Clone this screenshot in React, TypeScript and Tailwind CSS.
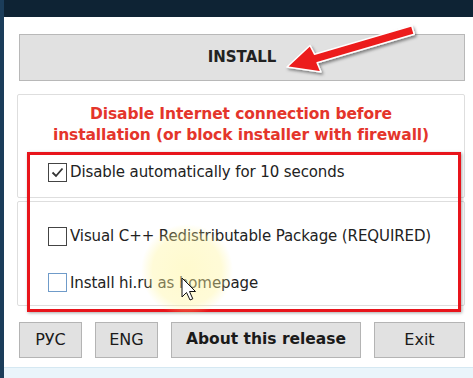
import React from 'react'

const font = { fontFamily: '"DejaVu Sans", Verdana, sans-serif' }

function Check({ checked = false, hover = false }: { checked?: boolean; hover?: boolean }) {
  return (
    <span
      className={
        'w-[19px] h-[19px] shrink-0 border bg-white flex items-center justify-center ' +
        (hover ? 'border-[#6f9bc9]' : 'border-[#444]')
      }
    >
      {checked && (
        <svg width="15" height="15" viewBox="0 0 15 15">
          <path d="M2.5 7.5 L6 11 L12.5 3.5" fill="none" stroke="#333" strokeWidth="1.8" />
        </svg>
      )}
    </span>
  )
}

function Row({ label, checked, hover }: { label: string; checked?: boolean; hover?: boolean }) {
  return (
    <label className="flex items-center gap-[3px] text-[15px] text-[#222] tracking-[-0.1px]">
      <Check checked={checked} hover={hover} />
      <span>{label}</span>
    </label>
  )
}

function Btn({ children, className }: { children: React.ReactNode; className: string }) {
  return (
    <button
      className={
        'h-[36px] bg-[#e1e1e1] border border-[#b4b4b4] text-[#1a1a1a] flex items-center justify-center ' +
        className
      }
    >
      {children}
    </button>
  )
}

export default function App() {
  return (
    <div className="relative w-[473px] h-[378px] bg-white overflow-hidden flex" style={font}>
      <div className="w-[4px] bg-[#1b3d5a] shrink-0" />
      <div className="flex-1 flex flex-col">
        <div className="h-[17px] bg-[#0e2334]" />

        <div className="flex-1 flex flex-col pl-[13px] pr-[11px]">
          <button className="mt-[17px] ml-[2px] h-[47px] bg-[#e1e1e1] border border-[#b8b8b8] text-[15px] font-bold text-[#222]">
            INSTALL
          </button>

          <div className="mt-[13px] h-[104px] border border-[#dedede] rounded-[2px] flex flex-col">
            <div className="pt-[9px] text-center text-[15.5px] leading-[21px] font-bold text-[#e4352b] tracking-[-0.1px]">
              <div>Disable Internet connection before</div>
              <div>installation (or block installer with firewall)</div>
            </div>
            <div className="mt-[15px] pl-[30px]">
              <Row label="Disable automatically for 10 seconds" checked />
            </div>
          </div>

          <div className="mt-[3px] h-[105px] border border-[#dedede] rounded-[2px] flex flex-col pl-[30px] pt-[23px] gap-[24px]">
            <Row label="Visual C++ Redistributable Package (REQUIRED)" />
            <Row label="Install hi.ru as homepage" hover />
          </div>

          <div className="mt-[16px] ml-[2px] flex gap-[13px]">
            <Btn className="w-[63px] text-[16px]">РУС</Btn>
            <Btn className="w-[63px] text-[16px]">ENG</Btn>
            <Btn className="w-[190px] text-[15.5px] font-bold">About this release</Btn>
            <Btn className="w-[91px] text-[16px]">Exit</Btn>
          </div>
        </div>

        <div className="h-[11px] bg-[#eaf5fb] border-t border-[#d5e8f2]" />
      </div>

      {/* annotation box */}
      <div className="absolute left-[27px] top-[152px] w-[434px] h-[160px] border-[3px] border-[#e8141b] shadow-[1px_1px_3px_rgba(0,0,0,0.35)] pointer-events-none" />

      <svg className="absolute inset-0 pointer-events-none" width="473" height="378" viewBox="0 0 473 378">
        <defs>
          <radialGradient id="hl" cx="0.5" cy="0.5" r="0.5">
            <stop offset="0" stopColor="#fff59c" stopOpacity="0.5" />
            <stop offset="0.75" stopColor="#fff59c" stopOpacity="0.4" />
            <stop offset="1" stopColor="#fff59c" stopOpacity="0" />
          </radialGradient>
          <filter id="sh" x="-20%" y="-20%" width="140%" height="160%">
            <feDropShadow dx="1.5" dy="2" stdDeviation="1.5" floodOpacity="0.45" />
          </filter>
        </defs>
        <circle cx="187" cy="270" r="46" fill="url(#hl)" />
        <path
          d="M411.7 25.7 L314.5 54.2 L310 45.5 L287 67 L321 72 L317.1 62.8 L414.3 34.3 Z"
          fill="#ec1c1c"
          stroke="#fff"
          strokeWidth="1.5"
          strokeLinejoin="round"
          filter="url(#sh)"
        />
        <path
          d="M182 278 L182 297 L186.5 292.5 L190 300 L192.8 298.8 L189.5 291.5 L195.5 291.5 Z"
          fill="#fff"
          stroke="#111"
          strokeWidth="1"
          strokeLinejoin="round"
        />
      </svg>
    </div>
  )
}
